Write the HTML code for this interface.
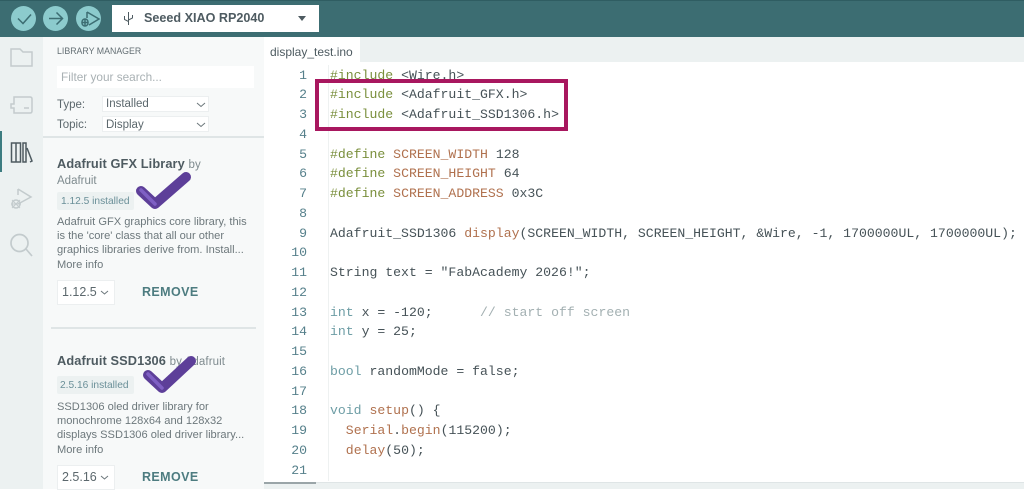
<!DOCTYPE html>
<html><head><meta charset="utf-8"><style>
*{box-sizing:border-box}
html,body{margin:0;padding:0}
body{width:1024px;height:489px;overflow:hidden;position:relative;background:#fff;font-family:"Liberation Sans",sans-serif;color:#4e5b61}
#w{position:absolute;left:0;top:0;width:1024px;height:489px;filter:blur(.3px)}
.a{position:absolute;white-space:nowrap}
.code{font-family:"Liberation Mono",monospace;font-size:13.16px;line-height:19.75px;color:#465257}
.ln{position:absolute;left:264px;width:43px;text-align:right;top:65.7px;font-family:"Liberation Mono",monospace;font-size:13.16px;line-height:19.75px;color:#56808b}
.g{color:#7a8f3c}.t{color:#6d9da5}.c{color:#a3b0b2}.br{color:#b0714e}
.sel{position:absolute;background:#fff;border:1px solid #eceff0;font-size:11.5px;color:#5c686d;padding-left:3px}
svg{position:absolute;overflow:visible}
</style></head><body><div id="w">
<div class="a" style="left:0;top:0;width:1024px;height:37px;background:#3c6d72"></div>
<div class="a" style="left:0;top:0;width:1024px;height:1px;background:#2f5d62"></div>
<div class="a" style="left:11px;top:6px;width:25px;height:25px;border-radius:50%;background:#8ccbcd"></div>
<div class="a" style="left:43px;top:6px;width:25px;height:25px;border-radius:50%;background:#8ccbcd"></div>
<div class="a" style="left:76px;top:6px;width:25px;height:25px;border-radius:50%;background:#8ccbcd"></div>
<svg style="left:0;top:0" width="110" height="37" fill="none" stroke="#3c6d72" stroke-width="1.5"><path d="M18 18.5l5 5 8-9"/><path d="M49 18.5h13M56.5 12.5l6 6-6 6"/><path d="M87 12l12 7-10 6M87 12v6"/><rect x="82" y="19" width="6" height="7" rx="3"/><path d="M82 22.500h6M85 19v7"/></svg>
<div class="a" style="left:112px;top:5px;width:207px;height:27px;background:#fff"></div>
<svg style="left:122px;top:11px" width="14" height="16" fill="none" stroke="#4e5b61" stroke-width="1"><path d="M6.500 1v13M2.500 5v3.500l4 2M10.500 4v3l-4 2"/></svg>
<div class="a" style="left:144px;top:10px;font-size:12.600px;font-weight:bold;line-height:17px;color:#4e5b61">Seeed XIAO RP2040</div>
<svg style="left:297px;top:16px" width="10" height="6"><path d="M1 0h8l-4 5z" fill="#4e5b61"/></svg>

<div class="a" style="left:0;top:37px;width:43px;height:452px;background:#ecf1f1"></div>
<div class="a" style="left:43px;top:37px;width:221px;height:452px;background:#f7f9f9"></div>
<div class="a" style="left:264px;top:37px;width:760px;height:452px;background:#fff"></div>
<div class="a" style="left:360px;top:37px;width:664px;height:25px;background:#ecf1f1"></div>

<svg style="left:0;top:0" width="43" height="270" fill="none" stroke="#c3cbcd" stroke-width="1.5"><path d="M11 49h9l3 3h9v14H11z"/><path d="M14 97h16q2 0 2 2v12q0 2-2 2H14v-5h-3v-4h3zM24 108h5"/></svg>
<div class="a" style="left:0;top:131px;width:2px;height:41px;background:#3c7c80"></div>
<svg style="left:0;top:131px" width="43" height="130" fill="none"><path d="M11.500 12h4.500v19h-4.500zM16 12h4.500v19h-4.500zM23 12h3v19h-3zM27 17l5 13-2 1" stroke="#4e5b61" stroke-width="1.500"/><path d="M18 58l13 8-13 7M18 58v6" stroke="#c3cbcd" stroke-width="1.500"/><circle cx="16" cy="73" r="4" stroke="#c3cbcd" stroke-width="1.500"/><path d="M11 73h10M12 69l8 8M20 69l-8 8" stroke="#c3cbcd" stroke-width="1"/><circle cx="19.500" cy="112" r="8.500" stroke="#c3cbcd" stroke-width="1.700"/><path d="M26 118l6 7" stroke="#c3cbcd" stroke-width="1.700"/></svg>

<div class="a" style="left:57px;top:45px;font-size:8.800px;line-height:13px;color:#646f74">LIBRARY MANAGER</div>
<div class="a" style="left:57px;top:66px;width:197px;height:22px;background:#fff;padding-left:4px;font-size:11.800px;line-height:23px;color:#a9b1b4">Filter your search...</div>
<div class="a" style="left:57px;top:98px;font-size:11.500px;line-height:14px;color:#5c686d">Type:</div>
<div class="a" style="left:57px;top:118px;font-size:11.500px;line-height:14px;color:#5c686d">Topic:</div>
<div class="sel a" style="left:102px;top:96px;width:107px;height:16px;line-height:15px">Installed</div>
<div class="sel a" style="left:102px;top:116px;width:107px;height:16px;line-height:16px">Display</div>
<svg style="left:196px;top:101px" width="12" height="30" fill="none" stroke="#6c777b"><path d="M1 2l4 3.500 4-3.500M1 22l4 3.500 4-3.500"/></svg>
<div class="a" style="left:43px;top:136px;width:221px;height:2px;background:#dfe5e6"></div>

<div class="a" style="left:57px;top:155px;font-size:12.800px;line-height:18px;color:#4e5b61;letter-spacing:.1px"><b>Adafruit GFX Library</b> <span style="font-size:11.500px;color:#7f8b8f">by</span></div>
<div class="a" style="left:57px;top:174px;font-size:11.500px;line-height:15px;color:#7f8b8f">Adafruit</div>
<div class="a" style="left:57px;top:192px;width:77px;height:18px;background:#ecf1f1;border-radius:2px;font-size:10.200px;line-height:20px;padding-left:4px;color:#6a8f98">1.12.5 installed</div>
<div class="a" style="left:57px;top:215px;font-size:11.100px;line-height:14.200px;color:#6d787c">Adafruit GFX graphics core library, this<br>is the 'core' class that all our other<br>graphics libraries derive from. Install...<br>More info</div>
<div class="sel a" style="left:57px;top:280px;width:58px;height:25px;line-height:23px;font-size:12.500px;padding-left:4px">1.12.5</div>
<svg style="left:100px;top:290px" width="10" height="6" fill="none" stroke="#6c777b"><path d="M1 1l3.500 3 3.500-3"/></svg>
<div class="a" style="left:142px;top:284px;font-size:12.500px;font-weight:bold;line-height:16px;color:#4d7c80;letter-spacing:.4px">REMOVE</div>

<div class="a" style="left:51px;top:327px;width:205px;height:2px;background:#dfe5e6"></div>
<div class="a" style="left:57px;top:352px;font-size:12.800px;line-height:18px;color:#4e5b61;letter-spacing:.1px"><b>Adafruit SSD1306</b> <span style="font-size:11.500px;color:#7f8b8f">by Adafruit</span></div>
<div class="a" style="left:57px;top:376px;width:77px;height:18px;background:#ecf1f1;border-radius:2px;font-size:10.200px;line-height:20px;padding-left:3px;color:#6a8f98">2.5.16 installed</div>
<div class="a" style="left:57px;top:400px;font-size:11.100px;line-height:14.200px;color:#6d787c">SSD1306 oled driver library for<br>monochrome 128x64 and 128x32<br>displays SSD1306 oled driver library...<br>More info</div>
<div class="sel a" style="left:57px;top:465px;width:58px;height:25px;line-height:23px;font-size:12.500px;padding-left:4px">2.5.16</div>
<svg style="left:100px;top:475px" width="10" height="6" fill="none" stroke="#6c777b"><path d="M1 1l3.500 3 3.500-3"/></svg>
<div class="a" style="left:142px;top:469px;font-size:12.500px;font-weight:bold;line-height:16px;color:#4d7c80;letter-spacing:.4px">REMOVE</div>

<svg style="left:0;top:0" width="264" height="489" fill="none" stroke-linecap="round" stroke-linejoin="round"><path d="M141 191l14 13 31-27" stroke="#5d3f99" stroke-width="10"/><path d="M148 375l14 13 29-27" stroke="#5d3f99" stroke-width="10"/><path d="M141 190l14 14" stroke="#7f60c4" stroke-width="3.500"/><path d="M148 374l14 14" stroke="#7f60c4" stroke-width="3.500"/></svg>

<div class="a" style="left:270px;top:44px;font-size:12px;line-height:16px;color:#4e5b61">display_test.ino</div>

<div class="ln">1<br>2<br>3<br>4<br>5<br>6<br>7<br>8<br>9<br>10<br>11<br>12<br>13<br>14<br>15<br>16<br>17<br>18<br>19<br>20<br>21</div>
<div class="a" style="left:328px;top:65px;width:1px;height:416px;background:#eef1f1"></div>
<div class="a code" style="left:330px;top:65.7px"><span class="g">#include</span> &lt;Wire.h&gt;<br><span class="g">#include</span> &lt;Adafruit_GFX.h&gt;<br><span class="g">#include</span> &lt;Adafruit_SSD1306.h&gt;<br><br><span class="g">#define</span> <span class="br">SCREEN_WIDTH</span> 128<br><span class="g">#define</span> <span class="br">SCREEN_HEIGHT</span> 64<br><span class="g">#define</span> <span class="br">SCREEN_ADDRESS</span> 0x3C<br><br>Adafruit_SSD1306 <span class="br">display</span>(SCREEN_WIDTH, SCREEN_HEIGHT, &amp;Wire, -1, 1700000UL, 1700000UL);<br><br>String text = "FabAcademy 2026!";<br><br><span class="t">int</span> x = -120;&nbsp;&nbsp;&nbsp;&nbsp;&nbsp; <span class="c">// start off screen</span><br><span class="t">int</span> y = 25;<br><br><span class="t">bool</span> randomMode = false;<br><br><span class="t">void</span> <span class="br">setup</span>() {<br>&nbsp;&nbsp;<span class="br">Serial</span>.<span class="br">begin</span>(115200);<br>&nbsp;&nbsp;<span class="br">delay</span>(50);</div>
<div class="a" style="left:315px;top:79px;width:253px;height:52px;border:4px solid #a8175f"></div>

<div class="a" style="left:264px;top:482px;width:760px;height:7px;background:#ecf1f1;border-top:1px solid #dfe5e6"></div>
<div class="a" style="left:264px;top:482px;width:52px;height:2px;background:#9aa5a8"></div>
</div></body></html>
